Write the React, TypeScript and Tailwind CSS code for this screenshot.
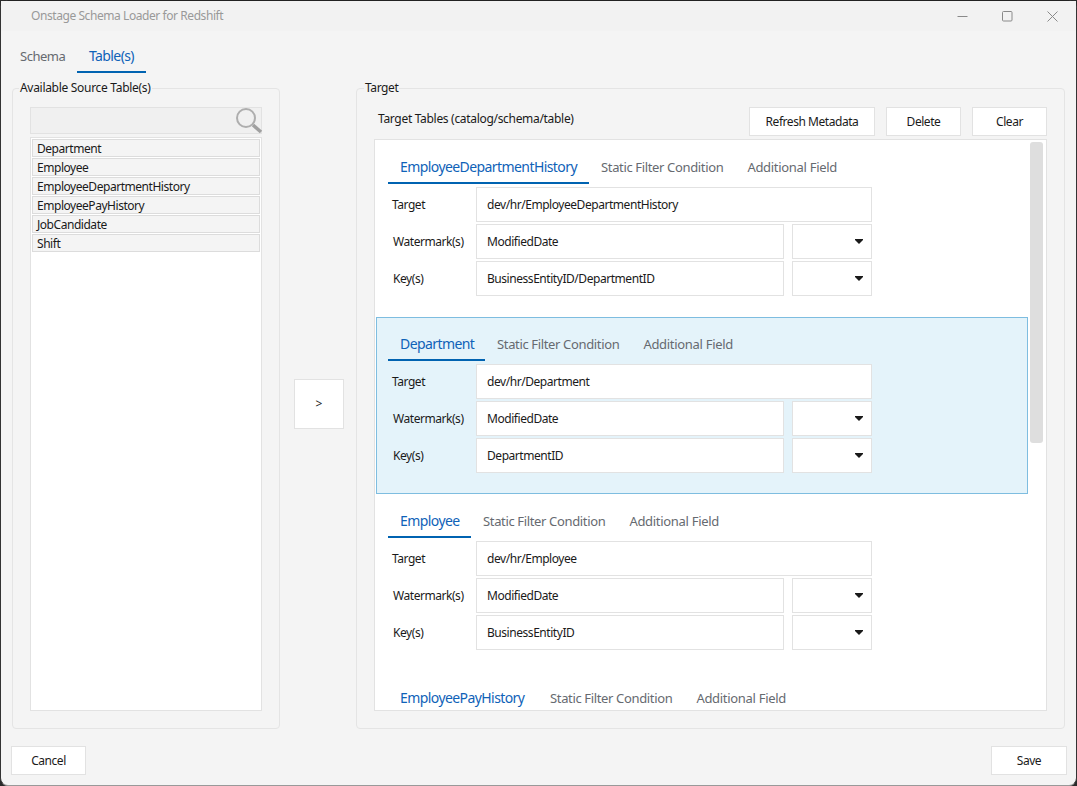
import React from "react";

const FONT = "font-['Noto_Sans','Open_Sans',sans-serif]";

function TabHeader({ name, w }: { name: string; w: string }) {
  return (
    <div className="flex h-[43px] items-end">
      <div className={`flex h-[29px] items-center border-b-2 border-[#0063b1] pl-3 pb-[4px] text-[14px] tracking-[-0.58px] text-[#0f62b8] ${w}`}>
        {name}
      </div>
      <div className="flex h-[29px] items-center px-3 pb-[3px] text-[13px] tracking-[-0.35px] text-[#666a70]">
        Static Filter Condition
      </div>
      <div className="flex h-[29px] items-center px-3 pb-[3px] text-[13px] tracking-[-0.3px] text-[#666a70]">
        Additional Field
      </div>
    </div>
  );
}

function Caret() {
  return (
    <svg width="8" height="5" viewBox="0 0 8 5" className="absolute right-[8px] top-[14px]">
      <path d="M0 0H8V1L4 5L0 1Z" fill="#1a1a1a" />
    </svg>
  );
}

function Row({ label, value, indent, select }: { label: string; value: string; indent: string; select?: boolean }) {
  return (
    <div className="flex h-[35px] items-center">
      <div className={`w-[88px] text-[12px] text-[#1a1a1a] tracking-[-0.45px] ${indent}`}>{label}</div>
      <div
        className={`flex h-[35px] items-center border border-[#e2e2e2] bg-white pl-[10px] text-[12px] tracking-[-0.45px] text-[#1a1a1a] ${
          select ? "w-[308px]" : "w-[396px]"
        }`}
      >
        {value}
      </div>
      {select && (
        <div className="relative ml-2 h-[35px] w-[80px] border border-[#e2e2e2] bg-white">
          <Caret />
        </div>
      )}
    </div>
  );
}

function Section({ name, keys, w, active }: { name: string; keys: string; w: string; active?: boolean }) {
  return (
    <div
      className={`h-[177px] w-[652px] shrink-0 border px-[11px] ${
        active ? "border-[#7ebde0] bg-[#e4f3fa]" : "border-transparent bg-white"
      }`}
    >
      <TabHeader name={name} w={w} />
      <div className="mt-[3px] flex flex-col gap-[2px]">
        <Row label="Target" indent="pl-1" value={`dev/hr/${name}`} />
        <Row label="Watermark(s)" indent="pl-[5px]" value="ModifiedDate" select />
        <Row label="Key(s)" indent="pl-[5px]" value={keys} select />
      </div>
    </div>
  );
}

function Btn({ children, w }: { children: React.ReactNode; w: string }) {
  return (
    <div className={`flex h-[29px] items-center justify-center border border-[#e2e2e2] bg-white text-[12px] tracking-[-0.45px] text-[#1a1a1a] ${w}`}>
      {children}
    </div>
  );
}

const items = ["Department", "Employee", "EmployeeDepartmentHistory", "EmployeePayHistory", "JobCandidate", "Shift"];

export default function App() {
  return (
    <div className={`h-[786px] w-[1077px] overflow-hidden bg-[#2a2a2a] ${FONT}`}>
      <div className="flex h-[786px] w-[1077px] flex-col rounded-[8px] border-t border-l border-r border-b border-t-[#222] border-l-[#333] border-r-[#333] border-b-[#999] bg-[#f4f4f4]">
        {/* title bar */}
        <div className="flex h-[30px] shrink-0 items-center justify-between bg-[#f2f2f2] pl-[30px] pr-[18px]">
          <span className="text-[12px] tracking-[-0.43px] text-[#999]">Onstage Schema Loader for Redshift</span>
          <div className="flex items-center gap-[34px]">
            <svg width="11" height="11" viewBox="0 0 11 11"><path d="M0.5 5.5H10.5" stroke="#8a8a8a" /></svg>
            <svg width="11" height="11" viewBox="0 0 11 11"><rect x="0.5" y="0.5" width="9.5" height="9.5" rx="1" fill="none" stroke="#8a8a8a" /></svg>
            <svg width="11" height="11" viewBox="0 0 11 11"><path d="M0.5 0.5L10.5 10.5M10.5 0.5L0.5 10.5" stroke="#8a8a8a" /></svg>
          </div>
        </div>

        {/* main tabs */}
        <div className="flex h-[42px] shrink-0 items-end pl-[7px]">
          <div className="flex h-[30px] w-[69px] items-center pl-3 pb-[3px] text-[13px] tracking-[-0.5px] text-[#666a70]">Schema</div>
          <div className="flex h-[30px] items-center border-b-2 border-[#0063b1] px-3 pb-[4px] text-[14px] tracking-[-0.6px] text-[#0f62b8]">Table(s)</div>
        </div>

        {/* content */}
        <div className="mt-[7px] flex items-center pl-[11px]">
          <fieldset className="flex h-[649px] w-[268px] shrink-0 flex-col rounded-[4px] border border-[#e4e4e4] pb-[17px] pl-[17px] pr-[17px]">
            <legend className="-ml-[11px] px-[1px] text-[12px] leading-[16px] tracking-[-0.3px] text-[#1a1a1a]">Available Source Table(s)</legend>
            <div className="relative mt-[11px] h-[27px] shrink-0 border border-[#e2e2e2] bg-[#f0f0f0]">
              <svg width="28" height="28" viewBox="0 0 28 28" className="absolute right-0 top-0 overflow-visible">
                <circle cx="13" cy="10" r="9" fill="none" stroke="#aeaeae" strokeWidth="2" />
                <path d="M20 17L28 24" stroke="#a0a0a0" strokeWidth="3.5" />
              </svg>
            </div>
            <div className="mt-[3px] flex flex-1 flex-col gap-px border border-[#e2e2e2] bg-white p-px">
              {items.map((it) => (
                <div key={it} className="flex h-[18px] items-center border border-[#dcdcdc] bg-[#f4f4f4] pl-[4px] pt-[1px] text-[12px] tracking-[-0.46px] text-[#1a1a1a]">
                  {it}
                </div>
              ))}
            </div>
          </fieldset>

          <div className="mb-[2px] ml-[14px] flex h-[50px] w-[50px] shrink-0 items-center justify-center border border-[#e2e2e2] bg-white text-[12px] text-[#1a1a1a]">
            &gt;
          </div>

          <fieldset className="ml-[12px] flex h-[649px] w-[709px] shrink-0 flex-col rounded-[4px] border border-[#e4e4e4] pb-[17px] pl-[17px] pr-[17px]">
            <legend className="-ml-[10px] px-[1px] text-[12px] leading-[16px] tracking-[-0.4px] text-[#1a1a1a]">Target</legend>
            <div className="mt-[11px] flex h-[29px] shrink-0 items-start">
              <span className="ml-[4px] mt-[3px] text-[12px] tracking-[-0.31px] text-[#1a1a1a]">Target Tables (catalog/schema/table)</span>
              <div className="ml-auto flex gap-[11px]">
                <Btn w="w-[126px]">Refresh Metadata</Btn>
                <Btn w="w-[75px]">Delete</Btn>
                <Btn w="w-[75px]">Clear</Btn>
              </div>
            </div>
            <div className="relative mt-[3px] flex flex-1 flex-col overflow-hidden border border-[#e2e2e2] bg-white pl-px">
              <Section name="EmployeeDepartmentHistory" w="w-[201px]" keys="BusinessEntityID/DepartmentID" />
              <Section name="Department" w="w-[97px]" keys="DepartmentID" active />
              <Section name="Employee" w="w-[83px]" keys="BusinessEntityID" />
              <div className="w-[652px] shrink-0 border border-transparent px-[11px]">
                <TabHeader name="EmployeePayHistory" w="w-[150px]" />
              </div>
              <div className="absolute right-[3px] top-[2px] h-[301px] w-[13px] rounded-[3px] bg-[#dedede]" />
            </div>
          </fieldset>
        </div>

        {/* footer */}
        <div className="mt-[17px] flex justify-between pl-[10px] pr-[9px]">
          <Btn w="w-[75px]">Cancel</Btn>
          <Btn w="w-[76px]">Save</Btn>
        </div>
      </div>
    </div>
  );
}
